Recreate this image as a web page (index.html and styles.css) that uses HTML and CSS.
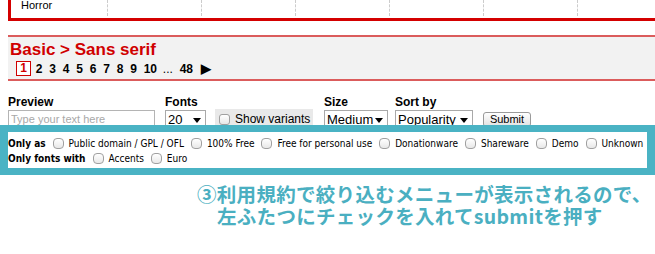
FILE: index.html
```html
<html>
    <head>
        <title>Fonts - Basic &gt; Sans serif</title>
        <link rel="stylesheet" href="styles.css">
    </head>
    <body>
        <div class="page">
            <div class="cat_row">
                <div class="cat_cell first">Horror</div>
                <div class="cat_cell"></div>
                <div class="cat_cell"></div>
                <div class="cat_cell"></div>
                <div class="cat_cell"></div>
                <div class="cat_cell"></div>
                <div class="cat_cell"></div>
                <div class="cat_cell"></div>
            </div>

            <div class="section_head">
                <div class="section_title">Basic &gt; Sans serif</div>
                <div class="pager">
                    <span class="page_num current">1</span>
                    <span class="page_num">2</span>
                    <span class="page_num">3</span>
                    <span class="page_num">4</span>
                    <span class="page_num">5</span>
                    <span class="page_num">6</span>
                    <span class="page_num">7</span>
                    <span class="page_num">8</span>
                    <span class="page_num">9</span>
                    <span class="page_num">10</span>
                    <span class="page_dots">...</span>
                    <span class="page_num">48</span>
                    <span class="page_next">&#9654;</span>
                </div>
            </div>

            <form class="options">
                <div class="field field_preview">
                    <div class="field_label">Preview</div>
                    <input class="preview_input" type="text" placeholder="Type your text here">
                </div>
                <div class="field field_fonts">
                    <div class="field_label">Fonts</div>
                    <div class="ctrl_row">
                        <div class="select_box w_fonts">20</div>
                        <label class="variants"><span class="check"></span>Show variants</label>
                    </div>
                </div>
                <div class="field field_size">
                    <div class="field_label">Size</div>
                    <div class="select_box w_size">Medium</div>
                </div>
                <div class="field field_sort">
                    <div class="field_label">Sort by</div>
                    <div class="ctrl_row">
                        <div class="select_box w_sort">Popularity</div>
                        <span class="submit_btn">Submit</span>
                    </div>
                </div>
            </form>
        </div>

        <div class="highlight">
            <div class="filter_box">
                <div class="filter_row">
                    <b>Only as</b>
                    <label><span class="check"></span>Public domain / GPL / OFL</label>
                    <label><span class="check"></span>100% Free</label>
                    <label><span class="check"></span>Free for personal use</label>
                    <label><span class="check"></span>Donationware</label>
                    <label><span class="check"></span>Shareware</label>
                    <label><span class="check"></span>Demo</label>
                    <label><span class="check"></span>Unknown</label>
                </div>
                <div class="filter_row">
                    <b>Only fonts with</b>
                    <label><span class="check"></span>Accents</label>
                    <label><span class="check"></span>Euro</label>
                </div>
            </div>
        </div>

        <div class="caption">
            <div class="caption_line">③利用規約で絞り込むメニューが表示されるので、</div>
            <div class="caption_line indent">左ふたつにチェックを入れてsubmitを押す</div>
        </div>
    </body>
</html>
```

FILE: styles.css
```css
body {

    margin: 0px;
    padding: 0px;
    width: 655px;
    height: 254px;
    overflow: hidden;
    background: #FFFFFF;
    font-family: "Liberation Sans", Arial, sans-serif;
    color: #000000;
}

div.page {

    padding: 0 0 0 8px;
}

/* category table, cut at the top */

div.cat_row {

    display: flex;
    width: 647px;
    height: 18px;
    overflow: hidden;
    border-left: 3px solid #D40000;
    border-bottom: 3px solid #D40000;
}

div.cat_cell {

    flex: none;
    width: 93px;
    height: 16px;
    border-right: 1px dashed #CCCCCC;
    font-size: 11px;
    line-height: 11px;
}

div.cat_cell.first {

    width: 86px;
    padding-left: 10px;
}

/* section heading */

div.section_head {

    margin-top: 14px;
    height: 42px;
    border-top: 2px solid #DB5C5C;
    border-bottom: 2px solid #DB5C5C;
    background: #F2F2F2;
}

div.section_title {

    padding: 4px 0 0 2px;
    height: 18px;
    font-size: 17px;
    font-weight: bold;
    line-height: 18px;
    color: #D00000;
}

div.pager {

    display: flex;
    align-items: center;
    gap: 6.8px;
    padding: 2px 0 0 8px;
    font-size: 12px;
    font-weight: bold;
}

span.page_num.current {

    width: 13px;
    height: 13px;
    margin-right: -2px;
    border: 1px solid #D00000;
    text-align: center;
    line-height: 13px;
    color: #D00000;
    background: #FFFFFF;
}

span.page_dots {

    font-weight: normal;
    margin-left: -1px;
    margin-right: 0px;
}

span.page_next {

    margin-left: 1px;
    font-size: 13px;
}

/* option form */

form.options {

    display: flex;
    margin: 14px 0 0 0;
    height: 30px;
    overflow: hidden;
}

div.field_label {

    height: 15px;
    font-size: 12px;
    font-weight: bold;
}

div.field_preview {

    width: 157px;
}

div.field_fonts {

    width: 159px;
}

div.field_size {

    width: 71px;
}

div.ctrl_row {

    display: flex;
    align-items: flex-start;
}

input.preview_input {

    width: 147px;
    height: 18px;
    margin: 0;
    padding: 1px 2px;
    border: 1px solid #B4B4B4;
    font-family: "Liberation Sans", Arial, sans-serif;
    font-size: 11px;
    outline: none;
}

input.preview_input::placeholder {

    color: #A8A8A8;
}

div.select_box {

    position: relative;
    height: 17px;
    padding-left: 2px;
    border: 1px solid #A9A9A9;
    border-bottom: none;
    font-size: 13px;
    line-height: 17px;
    background: #FFFFFF;
}

div.select_box::after {

    content: "";
    position: absolute;
    right: 4px;
    top: 7px;
    border-left: 4px solid transparent;
    border-right: 4px solid transparent;
    border-top: 5px solid #000000;
}

div.w_fonts {

    width: 37px;
}

div.w_size {

    width: 60px;
}

div.w_sort {

    width: 74px;
}

label.variants {

    display: flex;
    align-items: center;
    gap: 5px;
    margin-left: 9px;
    margin-top: -1px;
    width: 94px;
    height: 20px;
    padding-left: 4px;
    font-size: 12px;
    background: #E9E9E9;
}

span.check {

    flex: none;
    display: inline-block;
    width: 9px;
    height: 9px;
    border: 1px solid #A0A0A0;
    border-radius: 3px;
    background: linear-gradient(to bottom, #FFFFFF, #E8E8E8);
}

span.submit_btn {

    margin-left: 10px;
    margin-top: 2px;
    width: 46px;
    height: 13px;
    border: 1px solid #9A9A9A;
    border-radius: 3px;
    font-size: 11px;
    line-height: 13px;
    text-align: center;
    background: linear-gradient(to bottom, #FFFFFF, #E2E2E2);
}

/* teal highlight around the licence filter */

div.highlight {

    padding: 7px 8px 7px 8px;
    background: #4AB3C4;
}

div.filter_box {

    height: 30px;
    padding: 4px 0 2px 0;
    background: #FFFFFF;
    font-family: "DejaVu Sans Condensed", "DejaVu Sans", sans-serif;
    font-size: 10px;
    white-space: nowrap;
}

div.filter_row {

    display: flex;
    align-items: center;
    height: 15px;
    gap: 7px;
}

div.filter_row b,
div.filter_row label {

    flex: none;
}

div.filter_row label {

    display: flex;
    align-items: center;
    gap: 5px;
}

div.filter_row span.check {

    width: 9px;
    height: 9px;
    border-radius: 4px;
}

/* caption under the screenshot */

div.caption {

    padding: 8px 0 0 197px;
    font-family: "Noto Sans CJK JP", sans-serif;
    font-size: 19.5px;
    font-weight: bold;
    letter-spacing: 0.3px;
    line-height: 22px;
    white-space: nowrap;
    color: #4AAFC1;
}

div.caption_line.indent {

    padding-left: 20px;
}
```
